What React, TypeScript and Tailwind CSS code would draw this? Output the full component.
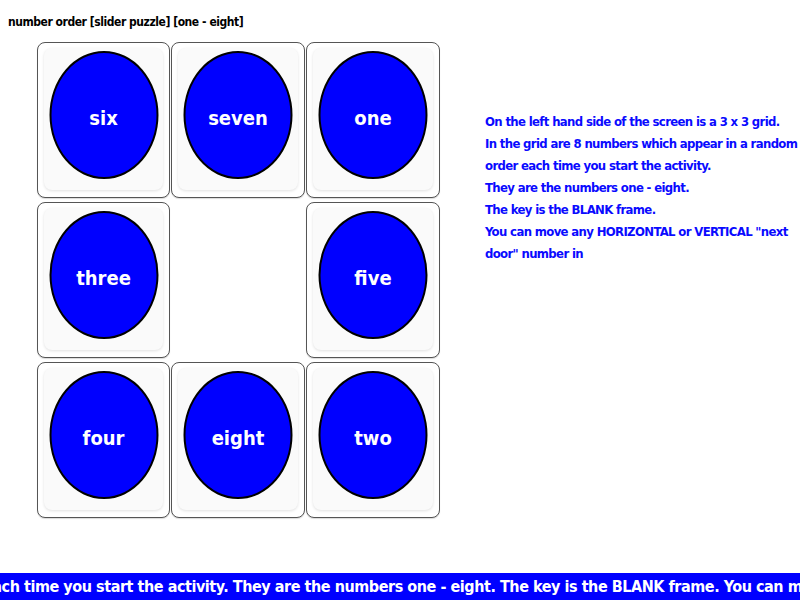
import React from 'react';

const font = { fontFamily: '"DejaVu Sans Condensed", "DejaVu Sans", sans-serif', fontStretch: 'condensed' };

const cells: (string | null)[] = ['six', 'seven', 'one', 'three', null, 'five', 'four', 'eight', 'two'];

const Tile = ({ label }: { label: string | null }) => {
  if (!label) return <div className="h-[156px]" />;
  return (
    <div className="relative h-[156px] rounded-lg border border-[#555] bg-white shadow-[0_1px_1px_rgba(0,0,0,0.15)]">
      <div className="absolute left-[6px] right-[6px] top-[5px] bottom-[7px] rounded-lg bg-[#fafafa] shadow-[0_1px_3px_rgba(0,0,0,0.12)]" />
      <div className="absolute left-1/2 top-[8px] flex h-[128px] w-[109px] -translate-x-1/2 items-center justify-center rounded-[50%] border-2 border-black bg-[#0000ff] pt-[5px]">
        <span className="text-[20px] font-bold text-white">{label}</span>
      </div>
    </div>
  );
};

const lines = [
  'On the left hand side of the screen is a 3 x 3 grid.',
  'In the grid are 8 numbers which appear in a random',
  'order each time you start the activity.',
  'They are the numbers one - eight.',
  'The key is the BLANK frame.',
  'You can move any HORIZONTAL or VERTICAL "next',
  'door" number in',
];

export default function App() {
  return (
    <div className="relative h-[600px] w-[800px] overflow-hidden bg-white" style={font}>
      <div className="pl-2 pt-[14px] text-[12px] font-bold leading-[16px] tracking-[-0.45px] text-black">
        number order [slider puzzle] [one - eight]
      </div>
      <div className="mt-[12px] flex">
        <div className="ml-[37px] grid w-[402px] grid-cols-[133px_134px_134px] gap-x-px gap-y-[4px]">
          {cells.map((c, i) => (
            <Tile key={i} label={c} />
          ))}
        </div>
        <div className="ml-[46px] mt-[69px] text-[13px] font-bold leading-[22px] tracking-[-0.65px] text-[#0a0aff]">
          {lines.map((l, i) => (
            <div key={i} className="whitespace-nowrap">{l}</div>
          ))}
        </div>
      </div>
      <div className="absolute bottom-0 left-0 h-[27px] w-[800px] overflow-hidden bg-[#0000ff]">
        <div className="ml-[-17px] whitespace-nowrap text-[16px] font-bold leading-[27px] tracking-[-0.45px] text-white">
          each time you start the activity. They are the numbers one - eight. The key is the BLANK frame. You can move any HORIZONTAL or VERTICAL "next door" number in
        </div>
      </div>
    </div>
  );
}
